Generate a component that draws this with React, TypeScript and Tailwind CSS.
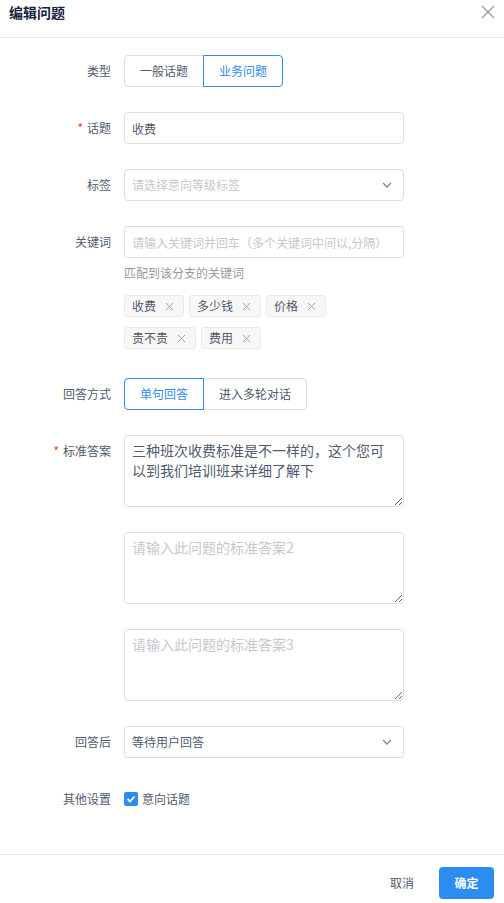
import { useState } from "react";

const FONT = { fontFamily: '"Noto Sans CJK SC", "Noto Sans", sans-serif' };

function Chevron() {
  return (
    <svg width="10" height="6" viewBox="0 0 10 6" className="shrink-0">
      <path d="M1 1l4 4 4-4" fill="none" stroke="#808695" strokeWidth="1.3" />
    </svg>
  );
}

function Label({ text, required = false }: { text: string; required?: boolean }) {
  return (
    <div className="flex h-[32px] w-[112px] shrink-0 items-center justify-end pr-px text-[12px] text-[#515a6e]">
      {required && <span className="mr-[4px] text-[#ed4014]">*</span>}
      {text}
    </div>
  );
}

function Row({
  label,
  required,
  children,
  className = "mb-[25px]",
}: {
  label: string;
  required?: boolean;
  children: React.ReactNode;
  className?: string;
}) {
  return (
    <div className={`flex ${className}`}>
      <Label text={label} required={required} />
      <div className="ml-[12px] w-[280px]">{children}</div>
    </div>
  );
}

function Segmented({ items, value }: { items: string[]; value: string }) {
  return (
    <div className="flex">
      {items.map((it, i) => {
        const active = it === value;
        return (
          <button
            key={it}
            className={`relative h-[32px] border px-[15px] text-[12px] ${
              i > 0 ? "-ml-px" : ""
            } ${i === 0 ? "rounded-l-[4px]" : ""} ${
              i === items.length - 1 ? "rounded-r-[4px]" : ""
            } ${
              active
                ? "z-10 border-[#2d8cf0] text-[#2d8cf0]"
                : "border-[#dcdee2] text-[#515a6e]"
            }`}
          >
            {it}
          </button>
        );
      })}
    </div>
  );
}

function Tag({ text }: { text: string }) {
  return (
    <span className="flex h-[22px] items-center rounded-[3px] border border-[#e8eaec] bg-[#f7f7f7] pl-[7px] pr-[7px] text-[12px] text-[#515a6e]">
      {text}
      <span className="ml-[6px] flex h-[14px] w-[14px] items-center justify-center">
        <svg width="9" height="9" viewBox="0 0 9 9">
          <path d="M1 1l7 7M8 1L1 8" stroke="#a0a4ac" strokeWidth="1" />
        </svg>
      </span>
    </span>
  );
}

export default function App() {
  const [answer, setAnswer] = useState(
    "三种班次收费标准是不一样的，这个您可以到我们培训班来详细了解下"
  );

  return (
    <div className="flex h-[903px] w-[504px] flex-col bg-white" style={FONT}>
      {/* header */}
      <div className="flex h-[38px] shrink-0 items-start justify-between border-b border-[#e8eaec] pl-[9px] pr-[9px] pt-[3px]">
        <span className="text-[14px] font-bold leading-[18px] text-[#17233d]">编辑问题</span>
        <svg width="14" height="14" viewBox="0 0 14 14" className="mt-[2px]">
          <path d="M1 1l12 12M13 1L1 13" stroke="#999" strokeWidth="1.2" />
        </svg>
      </div>

      {/* form */}
      <div className="flex-1 pt-[17px]">
        <Row label="类型">
          <Segmented items={["一般话题", "业务问题"]} value="业务问题" />
        </Row>

        <Row label="话题" required>
          <input
            defaultValue="收费"
            className="h-[32px] w-full rounded-[4px] border border-[#dcdee2] px-[7px] text-[12px] text-[#515a6e] outline-none"
          />
        </Row>

        <Row label="标签">
          <div className="flex h-[32px] w-full items-center justify-between rounded-[4px] border border-[#dcdee2] pl-[7px] pr-[11px] text-[12px] text-[#c5c8ce]">
            请选择意向等级标签
            <Chevron />
          </div>
        </Row>

        <Row label="关键词" className="mb-[29px]">
          <input
            placeholder="请输入关键词并回车（多个关键词中间以,分隔）"
            className="h-[32px] w-full rounded-[4px] border border-[#dcdee2] px-[7px] text-[12px] text-[#515a6e] outline-none placeholder:text-[#c5c8ce]"
          />
          <div className="mt-[5px] text-[12px] leading-[20px] text-[#999]">匹配到该分支的关键词</div>
          <div className="mt-[12px] flex flex-col gap-[10px]">
            <div className="flex gap-[5px]">
              <Tag text="收费" />
              <Tag text="多少钱" />
              <Tag text="价格" />
            </div>
            <div className="flex gap-[5px]">
              <Tag text="贵不贵" />
              <Tag text="费用" />
            </div>
          </div>
        </Row>

        <Row label="回答方式">
          <Segmented items={["单句回答", "进入多轮对话"]} value="单句回答" />
        </Row>

        <Row label="标准答案" required>
          <div className="flex flex-col gap-[25px]">
            <textarea
              value={answer}
              onChange={(e) => setAnswer(e.target.value)}
              className="block h-[72px] w-full resize-y rounded-[4px] border border-[#dcdee2] px-[7px] py-[4px] text-[14px] leading-[20px] text-[#515a6e] outline-none"
            />
            <textarea
              placeholder="请输入此问题的标准答案2"
              className="block h-[72px] w-full resize-y rounded-[4px] border border-[#dcdee2] px-[7px] py-[4px] text-[14px] leading-[20px] text-[#515a6e] outline-none placeholder:text-[#c5c8ce]"
            />
            <textarea
              placeholder="请输入此问题的标准答案3"
              className="block h-[72px] w-full resize-y rounded-[4px] border border-[#dcdee2] px-[7px] py-[4px] text-[14px] leading-[20px] text-[#515a6e] outline-none placeholder:text-[#c5c8ce]"
            />
          </div>
        </Row>

        <Row label="回答后">
          <div className="flex h-[32px] w-full items-center justify-between rounded-[4px] border border-[#dcdee2] pl-[7px] pr-[11px] text-[12px] text-[#515a6e]">
            等待用户回答
            <Chevron />
          </div>
        </Row>

        <Row label="其他设置">
          <label className="flex h-[32px] items-center text-[12px] text-[#515a6e]">
            <span className="mr-[4px] flex h-[14px] w-[14px] items-center justify-center rounded-[2px] bg-[#2d8cf0]">
              <svg width="10" height="8" viewBox="0 0 10 8">
                <path d="M1.5 4l2.5 2.5L8.5 1.5" fill="none" stroke="#fff" strokeWidth="1.8" />
              </svg>
            </span>
            意向话题
          </label>
        </Row>
      </div>

      {/* footer */}
      <div className="flex shrink-0 items-center justify-end gap-[10px] border-t border-[#e8eaec] pb-[4px] pl-[16px] pr-[10px] pt-[12px]">
        <button className="h-[32px] px-[15px] text-[12px] text-[#515a6e]">取消</button>
        <button className="h-[32px] w-[55px] rounded-[4px] bg-[#2d8cf0] text-[12px] font-bold text-white">
          确定
        </button>
      </div>
    </div>
  );
}
